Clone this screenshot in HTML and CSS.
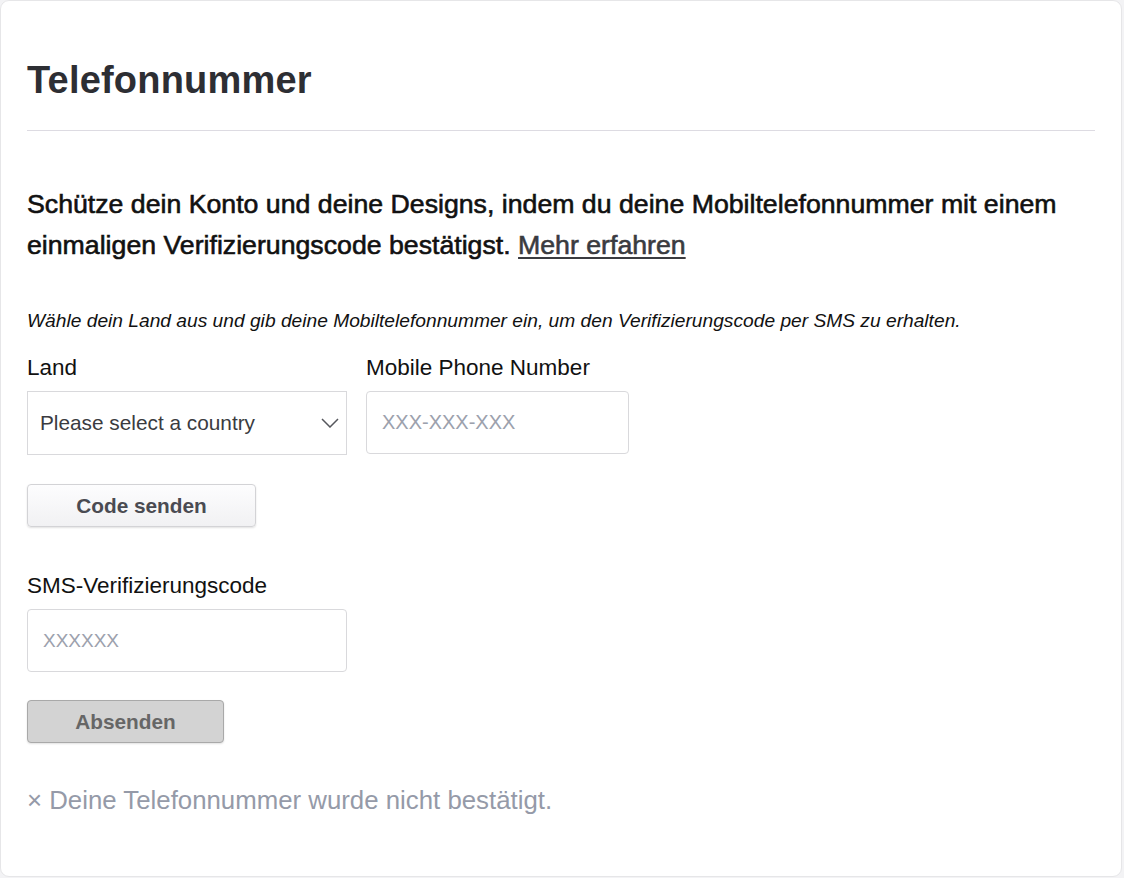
FILE: index.html
```html
<!DOCTYPE html>
<html lang="de">
<head>
<meta charset="utf-8">
<title>Telefonnummer</title>
<link rel="stylesheet" href="styles.css">
</head>
<body>
<main class="card">
  <h1 class="title">Telefonnummer</h1>
  <hr class="divider">
  <p class="intro">Schütze dein Konto und deine Designs, indem du deine Mobiltelefonnummer mit einem einmaligen Verifizierungscode bestätigst. <a href="#" class="more">Mehr erfahren</a></p>
  <p class="hint">Wähle dein Land aus und gib deine Mobiltelefonnummer ein, um den Verifizierungscode per SMS zu erhalten.</p>
  <div class="row">
    <div class="field">
      <label class="label">Land</label>
      <div class="select">
        <span>Please select a country</span>
        <svg class="chev" width="18" height="10" viewBox="0 0 18 10"><path d="M1 1 L9 9 L17 1" fill="none" stroke="#55565c" stroke-width="1.5"/></svg>
      </div>
    </div>
    <div class="field">
      <label class="label">Mobile Phone Number</label>
      <div class="input phone"><span class="ph">XXX-XXX-XXX</span></div>
    </div>
  </div>
  <button class="btn btn-light">Code senden</button>
  <div class="field sms">
    <label class="label">SMS-Verifizierungscode</label>
    <div class="input code"><span class="ph code-ph">XXXXXX</span></div>
  </div>
  <button class="btn btn-grey">Absenden</button>
  <p class="status">× Deine Telefonnummer wurde nicht bestätigt.</p>
</main>
</body>
</html>
```

FILE: styles.css
```css
html, body {
  margin: 0;
  padding: 0;
}
body {
  background: #f3f3f5;
  font-family: "Liberation Sans", Arial, sans-serif;
  color: #111;
  width: 1124px;
  height: 878px;
  overflow: hidden;
}
.card {
  box-sizing: border-box;
  width: 1122px;
  height: 877px;
  background: #fff;
  border: 1px solid #e6e6e8;
  border-radius: 9px;
  padding: 0 26px 0 26px;
  display: flex;
  flex-direction: column;
  align-items: flex-start;
}
.title {
  margin: 57px 0 0 0;
  font-size: 38px;
  line-height: 44px;
  font-weight: 700;
  color: #2d2e33;
  letter-spacing: 0.2px;
}
.divider {
  align-self: stretch;
  margin: 28px 0 0 0;
  border: 0;
  height: 1px;
  background: #dddbe2;
}
.intro {
  margin: 53px 0 0 0;
  font-size: 26.7px;
  line-height: 41px;
  font-weight: 400;
  color: #111;
  -webkit-text-stroke: 0.6px #111;
}
.more {
  color: #3a3b40;
  -webkit-text-stroke: 0.6px #3a3b40;
  text-decoration: underline;
  text-decoration-thickness: 1.5px;
  text-underline-offset: 3px;
}
.hint {
  margin: 44px 0 0 0;
  font-size: 19.2px;
  line-height: 22px;
  font-style: italic;
  color: #111;
}
.row {
  display: flex;
  gap: 19px;
  margin-top: 23px;
}
.field {
  display: flex;
  flex-direction: column;
}
.label {
  font-size: 22.5px;
  line-height: 26px;
  color: #111;
  margin-bottom: 10px;
}
.select {
  box-sizing: border-box;
  width: 320px;
  height: 64px;
  border: 1px solid #d9d9dc;
  display: flex;
  align-items: center;
  justify-content: space-between;
  padding: 0 7px 0 12px;
  font-size: 20.8px;
  color: #3a3b40;
}
.input {
  box-sizing: border-box;
  height: 63px;
  border: 1px solid #d9d9dc;
  border-radius: 4px;
  display: flex;
  align-items: center;
  padding: 0 15px;
  font-size: 20px;
}
.phone { width: 263px; }
.code { width: 320px; }
.ph { color: #9ca1ad; }
.code-ph { font-size: 19px; }
.btn {
  box-sizing: border-box;
  height: 43px;
  border-radius: 4px;
  font-family: "Liberation Sans", Arial, sans-serif;
  font-size: 20.8px;
  font-weight: 700;
  padding: 0;
}
.btn-light {
  margin-top: 29px;
  width: 229px;
  background: linear-gradient(#fdfdfe, #f1f1f3);
  border: 1px solid #d3d3d6;
  color: #4a4b52;
  box-shadow: 0 1px 2px rgba(0,0,0,0.12);
}
.sms {
  margin-top: 46px;
}
.btn-grey {
  margin-top: 28px;
  width: 197px;
  background: #d3d3d3;
  border: 1px solid #a9a9a9;
  color: #666;
  box-shadow: 0 1px 2px rgba(0,0,0,0.12);
}
.status {
  margin: 43px 0 0 0;
  font-size: 25.8px;
  line-height: 28px;
  color: #959aa8;
}
```
